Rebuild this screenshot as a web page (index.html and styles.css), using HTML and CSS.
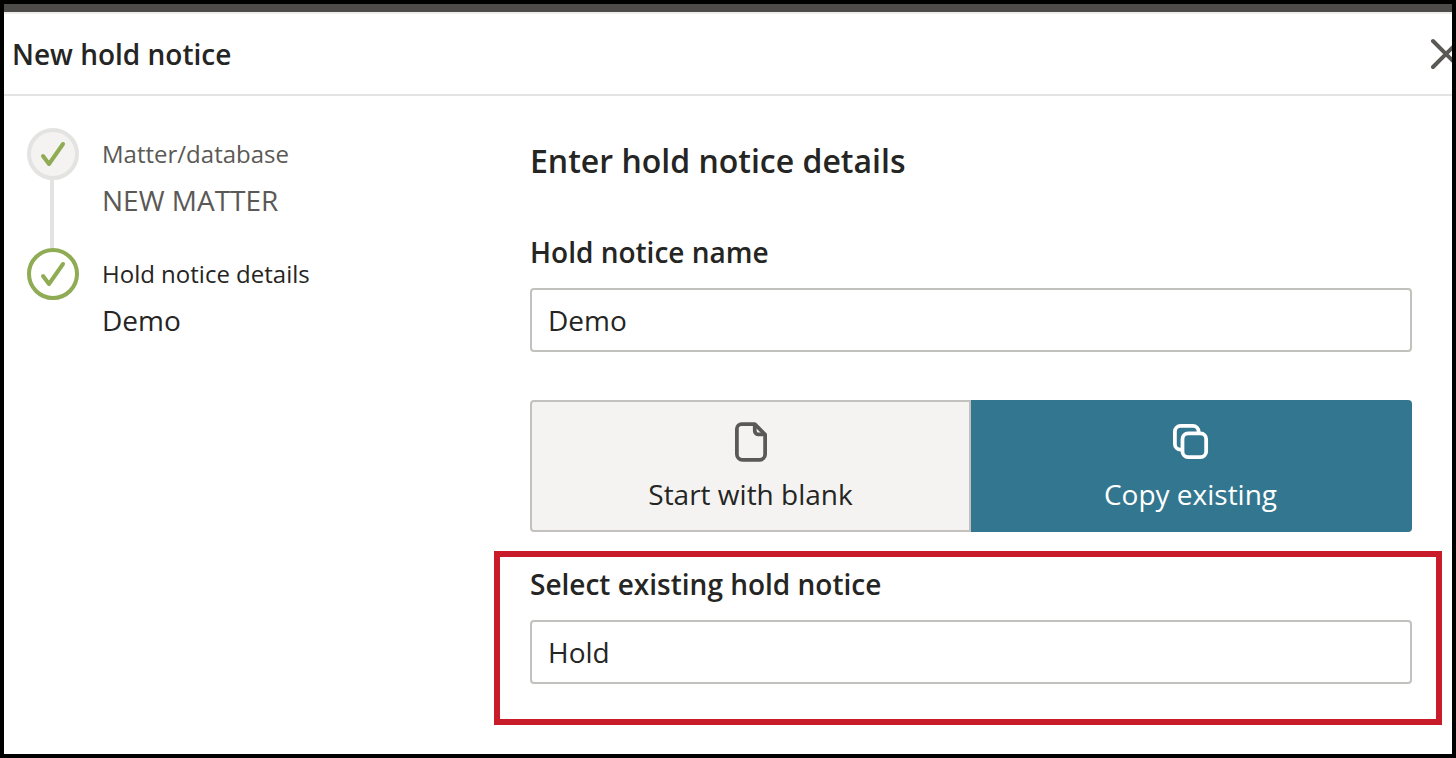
FILE: index.html
```html
<!DOCTYPE html>
<html lang="en">
<head>
    <meta charset="UTF-8">
    <meta name="viewport" content="width=device-width, initial-scale=1.0">
    <title>New hold notice</title>
    <link rel="stylesheet" href="styles.css">
</head>
<body>
    <div class="frame">
        <div class="top-bar"></div>
        <div class="header">
            <h1>New hold notice</h1>
            <svg class="close" width="34" height="34" viewBox="0 0 34 34">
                <path d="M4 4L30 30M30 4L4 30" fill="none" stroke="#5b5956" stroke-width="4" stroke-linecap="round"/>
            </svg>
        </div>
        <div class="content">
            <div class="steps">
                <div class="step">
                    <div class="track">
                        <div class="circle done">
                            <svg width="28" height="26" viewBox="0 0 28 26"><path d="M4 15L10 23L24 3" fill="none" stroke="#8fab54" stroke-width="4" stroke-linecap="round" stroke-linejoin="round"/></svg>
                        </div>
                        <div class="line"></div>
                    </div>
                    <div class="step-text muted">
                        <div class="step-label">Matter/database</div>
                        <div class="step-value">NEW MATTER</div>
                    </div>
                </div>
                <div class="step">
                    <div class="track">
                        <div class="circle current">
                            <svg width="28" height="26" viewBox="0 0 28 26"><path d="M4 15L10 23L24 3" fill="none" stroke="#8fab54" stroke-width="4" stroke-linecap="round" stroke-linejoin="round"/></svg>
                        </div>
                    </div>
                    <div class="step-text">
                        <div class="step-label">Hold notice details</div>
                        <div class="step-value">Demo</div>
                    </div>
                </div>
            </div>
            <div class="main">
                <h2>Enter hold notice details</h2>
                <label class="field-label">Hold notice name</label>
                <div class="input">Demo</div>
                <div class="choice">
                    <div class="choice-btn blank">
                        <svg class="doc-icon" width="32" height="40" viewBox="0 0 34 42">
                            <path d="M7 2H21L32 13V34a6 6 0 0 1-6 6H8a6 6 0 0 1-6-6V7a5 5 0 0 1 5-5Z" fill="none" stroke="#5b5956" stroke-width="4" stroke-linejoin="round"/>
                            <path d="M21 2V9a4 4 0 0 0 4 4H32" fill="none" stroke="#5b5956" stroke-width="4"/>
                        </svg>
                        <span>Start with blank</span>
                    </div>
                    <div class="choice-btn selected">
                        <svg class="copy-icon" width="36" height="36" viewBox="0 0 38 38">
                            <path d="M9 27H8a6 6 0 0 1-6-6V8a6 6 0 0 1 6-6H21a6 6 0 0 1 6 6V9" fill="none" stroke="#fff" stroke-width="4"/>
                            <rect x="10" y="10" width="25" height="25" rx="6" fill="none" stroke="#fff" stroke-width="4"/>
                        </svg>
                        <span>Copy existing</span>
                    </div>
                </div>
                <div class="highlight">
                    <label class="field-label">Select existing hold notice</label>
                    <div class="input">Hold</div>
                </div>
            </div>
        </div>
    </div>
</body>
</html>
```

FILE: styles.css
```css
html, body {
    margin: 0;
    height: 100%;
}
body {
    font-family: "Open Sans", "Noto Sans", sans-serif;
    color: #252523;
    background: #fff;
}
.frame {
    box-sizing: border-box;
    height: 758px;
    border: 4px solid #000;
    overflow: hidden;
}
.top-bar {
    height: 8px;
    background: #4e4c4a;
    border-bottom: 2px solid #eeeeec;
}
.header {
    display: flex;
    align-items: center;
    justify-content: space-between;
    box-sizing: border-box;
    height: 82px;
    padding-left: 8px;
    margin-right: -8px;
    border-bottom: 2px solid #e3e3e2;
}
.header h1 {
    margin: 0;
    font-size: 28px;
    font-weight: 600;
}
.close {
    flex: none;
    margin-right: -3px;
}
.content {
    display: flex;
}
.steps {
    width: 526px;
    flex: none;
    padding: 32px 0 0 23px;
    box-sizing: border-box;
}
.step {
    display: flex;
    height: 120px;
}
.track {
    display: flex;
    flex-direction: column;
    align-items: center;
    width: 52px;
    flex: none;
    margin-right: 23px;
}
.line {
    width: 4px;
    flex: 1;
    margin-right: 2px;
    background: #e3e3e2;
}
.circle {
    box-sizing: border-box;
    width: 52px;
    height: 52px;
    border-radius: 50%;
    display: flex;
    align-items: center;
    justify-content: center;
}
.circle.done {
    border: 4px solid #e3e3e2;
    background: #f4f3f1;
}
.circle.current {
    border: 4px solid #8fab54;
    background: #fff;
}
.step-text {
    padding-top: 10px;
}
.step-text.muted {
    color: #5b5956;
}
.step-label {
    font-size: 24px;
    line-height: 32px;
}
.step-value {
    font-size: 28px;
    line-height: 38px;
    margin-top: 11px;
}
.main {
    width: 882px;
    flex: none;
}
.main h2 {
    margin: 43px 0 0;
    font-size: 32px;
    line-height: 44px;
    font-weight: 600;
}
.field-label {
    display: block;
    font-size: 28px;
    line-height: 36px;
    font-weight: 600;
}
.main h2 + .field-label {
    margin-top: 51px;
}
.input {
    box-sizing: border-box;
    height: 64px;
    margin-top: 18px;
    padding-left: 16px;
    border: 2px solid #c2c1bd;
    border-radius: 4px;
    font-size: 28px;
    line-height: 60px;
}
.choice {
    display: flex;
    height: 132px;
    margin-top: 48px;
}
.choice-btn {
    box-sizing: border-box;
    width: 50%;
    flex: none;
    display: flex;
    flex-direction: column;
    align-items: center;
    justify-content: flex-end;
    font-size: 28px;
    line-height: 38px;
    padding-bottom: 17px;
}
.doc-icon {
    margin-bottom: 13px;
}
.copy-icon {
    margin-bottom: 15px;
}
.blank {
    background: #f4f3f1;
    border: 2px solid #c2c1bd;
    border-radius: 4px 0 0 4px;
}
.selected {
    background: #33768f;
    color: #fff;
    border-radius: 0 4px 4px 0;
    padding-bottom: 19px;
    padding-right: 2px;
}
.highlight {
    box-sizing: border-box;
    height: 174px;
    margin: 19px -30px 0 -36px;
    padding: 9px 24px 0 30px;
    border: 6px solid #c91c2b;
}
```
